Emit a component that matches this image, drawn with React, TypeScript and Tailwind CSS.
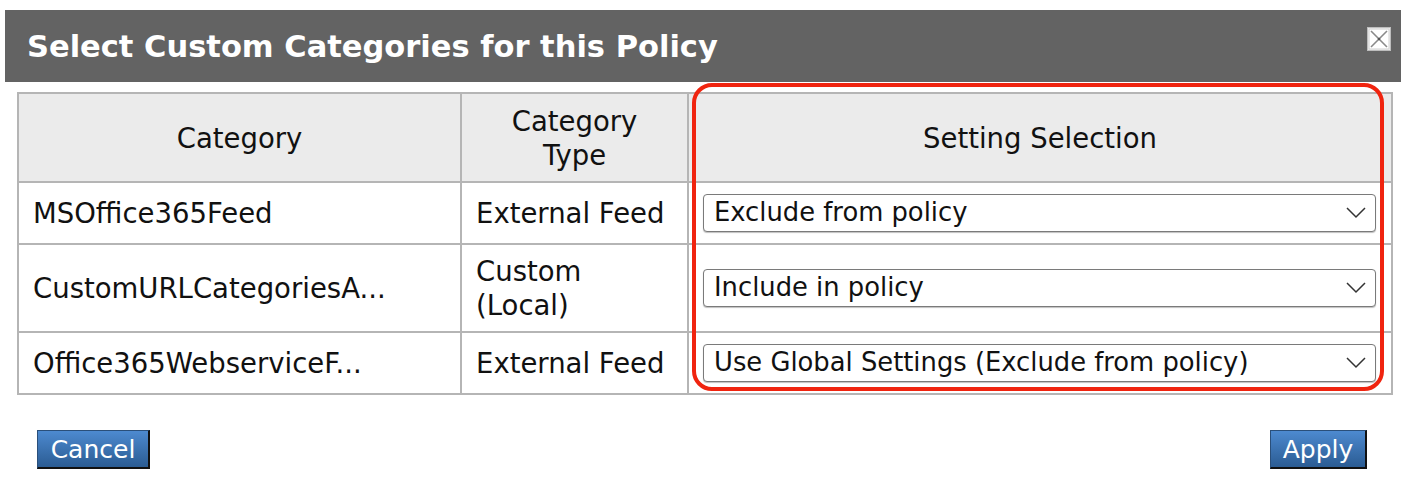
interface CategoryRow {
  name: string;
  type: string[];
  setting: string;
}

const ROWS: CategoryRow[] = [
  { name: 'MSOffice365Feed', type: ['External Feed'], setting: 'Exclude from policy' },
  { name: 'CustomURLCategoriesA...', type: ['Custom', '(Local)'], setting: 'Include in policy' },
  { name: 'Office365WebserviceF...', type: ['External Feed'], setting: 'Use Global Settings (Exclude from policy)' },
];

const FONT = "font-['DejaVu_Sans',Verdana,sans-serif]";

function CloseBox() {
  return (
    <svg width="24" height="24" viewBox="0 0 24 24" className="block">
      <rect x="0.5" y="0.5" width="23" height="23" fill="#f2f2f2" stroke="#bdbdbd" />
      <rect x="2" y="2" width="20" height="20" fill="#ffffff" stroke="#d0d0d0" />
      <path d="M4 4 L20 20 M20 4 L4 20" stroke="#8a8a8a" strokeWidth="1.6" />
      <circle cx="12" cy="12" r="1.3" fill="#555" />
    </svg>
  );
}

function Chevron() {
  return (
    <svg width="20" height="12" viewBox="0 0 20 12" className="block">
      <path d="M1 1 L10 10 L19 1" fill="none" stroke="#333" strokeWidth="1.5" />
    </svg>
  );
}

function SettingSelect({ value }: { value: string }) {
  return (
    <div className="flex items-center justify-between h-[38px] rounded-[4px] border border-[#7a7a7a] bg-white pl-[10px] pr-[9px] shadow-[0_1px_1px_rgba(0,0,0,0.25)]">
      <span className="text-[25.8px] text-[#111] leading-none">{value}</span>
      <Chevron />
    </div>
  );
}

function ActionButton({ label, width }: { label: string; width: string }) {
  return (
    <button
      className={`${width} h-[39px] bg-gradient-to-b from-[#4d8ad0] to-[#2b5c93] border border-[#2a4f7a] border-r-[#111] border-b-[#111] border-r-2 border-b-2 text-white text-[25px] leading-none`}
    >
      {label}
    </button>
  );
}

export default function App() {
  return (
    <div className={`w-[1406px] h-[496px] bg-white ${FONT}`}>
      <div className="pt-[10px] px-[5px]">
        <div className="flex items-center justify-between h-[72px] bg-[#636363] pl-[22px] pr-[10px]">
          <h1 className="text-white font-bold text-[30.5px] mt-[2px]">Select Custom Categories for this Policy</h1>
          <div className="self-start mt-[17px]">
            <CloseBox />
          </div>
        </div>
      </div>

      <div className="relative mx-[17px] mt-[10px]">
        <table className="w-[1376px] border-collapse border-2 border-[#b5b5b5] text-[27.5px] text-[#111]">
          <colgroup>
            <col className="w-[443px]" />
            <col className="w-[227px]" />
            <col />
          </colgroup>
          <thead>
            <tr className="h-[89px] bg-[#ebebeb]">
              <th className="border-2 border-[#b5b5b5] font-normal leading-[34px]">Category</th>
              <th className="border-2 border-[#b5b5b5] font-normal leading-[34px]">
                Category
                <br />
                Type
              </th>
              <th className="border-2 border-[#b5b5b5] font-normal leading-[34px]">Setting Selection</th>
            </tr>
          </thead>
          <tbody>
            {ROWS.map((row) => (
              <tr key={row.name} className={row.type.length > 1 ? 'h-[88px]' : 'h-[62px]'}>
                <td className="border-2 border-[#b5b5b5] px-[14px] leading-[34px] whitespace-nowrap">{row.name}</td>
                <td className="border-2 border-[#b5b5b5] px-[14px] leading-[34px] whitespace-nowrap">
                  {row.type.map((t, i) => (
                    <div key={i}>{t}</div>
                  ))}
                </td>
                <td className="border-2 border-[#b5b5b5] pl-[14px] pr-[15px]">
                  <SettingSelect value={row.setting} />
                </td>
              </tr>
            ))}
          </tbody>
        </table>

        {/* highlight around the setting column */}
        <div className="absolute left-[675px] top-[-9px] w-[692px] h-[308px] border-4 border-[#f0240f] rounded-[20px] pointer-events-none" />
      </div>

      <div className="flex justify-between pl-[37px] pr-[39px] mt-[35px]">
        <ActionButton label="Cancel" width="w-[113px]" />
        <ActionButton label="Apply" width="w-[97px]" />
      </div>
    </div>
  );
}
